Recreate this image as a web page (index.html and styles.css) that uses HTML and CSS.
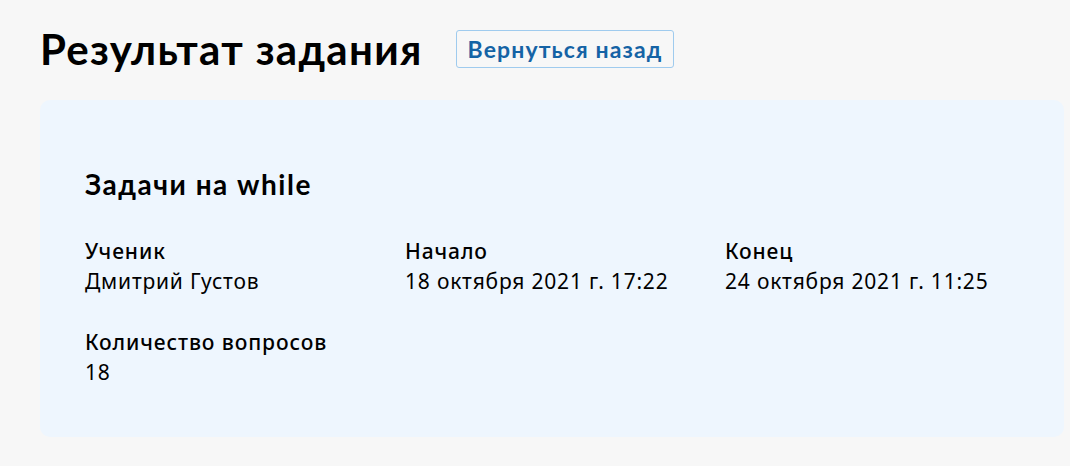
FILE: index.html
```html
<!DOCTYPE html>
<html lang="ru">
<head>
<meta charset="utf-8">
<title>Результат задания</title>
<link rel="stylesheet" href="styles.css">
</head>
<body>
<main class="page">
  <header class="page-header">
    <h1 class="page-title">Результат задания</h1>
    <a class="back-btn" href="#">Вернуться назад</a>
  </header>
  <section class="card">
    <h2 class="card-title">Задачи на while</h2>
    <div class="info-grid">
      <div class="info-item">
        <div class="info-label">Ученик</div>
        <div class="info-value">Дмитрий Густов</div>
      </div>
      <div class="info-item">
        <div class="info-label">Начало</div>
        <div class="info-value">18 октября 2021 г. 17:22</div>
      </div>
      <div class="info-item">
        <div class="info-label">Конец</div>
        <div class="info-value">24 октября 2021 г. 11:25</div>
      </div>
      <div class="info-item">
        <div class="info-label">Количество вопросов</div>
        <div class="info-value">18</div>
      </div>
    </div>
  </section>
</main>
</body>
</html>
```

FILE: styles.css
```css
* { box-sizing: border-box; }
html, body { margin: 0; padding: 0; }
body {
  background: #f7f7f7;
  color: #000;
  font-family: "Noto Sans", "Open Sans", sans-serif;
}
.page {
  padding: 30px 6px 0 40px;
}
.page-header {
  display: flex;
  align-items: center;
  gap: 33px;
  height: 38px;
}
.page-title {
  margin: 0;
  font-family: "Lato", "Noto Sans", sans-serif;
  font-weight: 700;
  font-size: 42px;
  line-height: 38px;
  letter-spacing: 1.3px;
}
.back-btn {
  display: inline-flex;
  align-items: center;
  height: 38px;
  padding: 0 11px;
  border: 1px solid #9fcbee;
  border-radius: 3px;
  color: #1563a5;
  font-family: "Lato", "Noto Sans", sans-serif;
  font-weight: 700;
  font-size: 23px;
  letter-spacing: 1.1px;
  text-decoration: none;
}
.card {
  margin-top: 32px;
  background: #eef6fe;
  border-radius: 10px;
  padding: 66px 45px 48px;
  min-height: 337px;
}
.card-title {
  margin: 0 0 34px;
  font-family: "Lato", "Noto Sans", sans-serif;
  font-weight: 700;
  font-size: 28px;
  line-height: 36px;
  letter-spacing: 1.5px;
}
.info-grid {
  display: grid;
  grid-template-columns: repeat(3, 320px);
  row-gap: 31px;
}
.info-label {
  font-size: 21px;
  line-height: 30px;
  font-weight: 500;
  letter-spacing: 0.9px;
}
.info-value {
  font-size: 21px;
  line-height: 30px;
  font-weight: 400;
  letter-spacing: 0.8px;
}
```
